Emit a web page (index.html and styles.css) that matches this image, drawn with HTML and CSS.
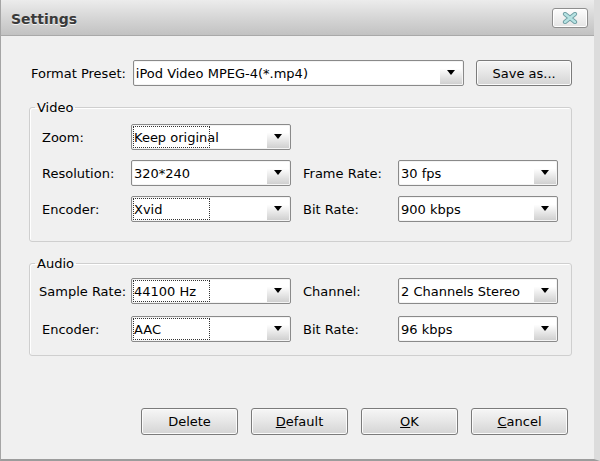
FILE: index.html
```html
<!DOCTYPE html>
<html lang="en">
<head>
    <meta charset="UTF-8">
    <title>Settings</title>
    <link rel="stylesheet" href="styles.css">
</head>
<body>
    <div class="window">
        <!-- barra de titulo -->
        <div class="titlebar">
            <span class="title">Settings</span>
            <button class="close" type="button">
                <svg width="16" height="12" viewBox="0 0 16 12">
                    <path d="M3 2 L13 10 M13 2 L3 10" stroke="#6f9ea3" stroke-width="4.2" stroke-linecap="round"/>
                    <path d="M3 2 L13 10 M13 2 L3 10" stroke="#b6e2e2" stroke-width="2.4" stroke-linecap="round"/>
                </svg>
            </button>
        </div>

        <div class="content">
            <div class="preset-row">
                <span class="preset-label">Format Preset:</span>
                <div class="combo combo-wide">
                    <span class="combo-text">iPod Video MPEG-4(*.mp4)</span>
                    <span class="combo-arrow"></span>
                </div>
                <button class="btn btn-save" type="button">Save as...</button>
            </div>

            <fieldset class="group group-video">
                <legend>Video</legend>
                <div class="grid">
                    <span class="field-label">Zoom:</span>
                    <div class="combo">
                        <span class="combo-text focus">Keep original</span>
                        <span class="combo-arrow"></span>
                    </div>
                    <span></span>
                    <span></span>

                    <span class="field-label">Resolution:</span>
                    <div class="combo">
                        <span class="combo-text">320*240</span>
                        <span class="combo-arrow"></span>
                    </div>
                    <span class="field-label">Frame Rate:</span>
                    <div class="combo">
                        <span class="combo-text">30 fps</span>
                        <span class="combo-arrow"></span>
                    </div>

                    <span class="field-label">Encoder:</span>
                    <div class="combo">
                        <span class="combo-text focus">Xvid</span>
                        <span class="combo-arrow"></span>
                    </div>
                    <span class="field-label">Bit Rate:</span>
                    <div class="combo">
                        <span class="combo-text">900 kbps</span>
                        <span class="combo-arrow"></span>
                    </div>
                </div>
            </fieldset>

            <fieldset class="group group-audio">
                <legend>Audio</legend>
                <div class="grid">
                    <span class="field-label field-label-wide">Sample Rate:</span>
                    <div class="combo">
                        <span class="combo-text focus">44100 Hz</span>
                        <span class="combo-arrow"></span>
                    </div>
                    <span class="field-label">Channel:</span>
                    <div class="combo">
                        <span class="combo-text">2 Channels Stereo</span>
                        <span class="combo-arrow"></span>
                    </div>

                    <span class="field-label">Encoder:</span>
                    <div class="combo">
                        <span class="combo-text focus">AAC</span>
                        <span class="combo-arrow"></span>
                    </div>
                    <span class="field-label">Bit Rate:</span>
                    <div class="combo">
                        <span class="combo-text">96 kbps</span>
                        <span class="combo-arrow"></span>
                    </div>
                </div>
            </fieldset>

            <!-- botoes de baixo -->
            <div class="buttons">
                <button class="btn" type="button">Delete</button>
                <button class="btn" type="button"><u>D</u>efault</button>
                <button class="btn" type="button"><u>O</u>K</button>
                <button class="btn" type="button"><u>C</u>ancel</button>
            </div>
        </div>
    </div>
</body>
</html>
```

FILE: styles.css
```css
body {
    margin: 0;
    background: #f0f0f0;
    font: normal 13px "DejaVu Sans", sans-serif;
    color: #000;
}

.window {
    width: 600px;
    height: 461px;
    box-sizing: border-box;
    display: flex;
    flex-direction: column;
    background: #f0f0f0;
    border: 1px solid #a5a5a5;
    border-top: none;
    border-right: 6px solid #dcdcdc;
    border-bottom: 2px solid #9c9c9c;
}

.titlebar {
    height: 36px;
    box-sizing: border-box;
    display: flex;
    align-items: center;
    justify-content: space-between;
    padding: 2px 6px 0 10px;
    background: linear-gradient(to bottom, #ececec, #d2d2d2 60%, #c2c2c2);
    border-bottom: 1px solid #a9a9a9;
}

.title {
    font: bold 14px "DejaVu Sans", sans-serif;
    color: #3a3a3a;
    text-shadow: 0 1px 0 #f4f4f4;
}

.close {
    width: 36px;
    height: 20px;
    margin-bottom: 2px;
    padding: 0;
    display: flex;
    align-items: center;
    justify-content: center;
    border: 1px solid #8e8e8e;
    border-radius: 3px;
    background: linear-gradient(to bottom, #fdfdfd, #e4e4e4);
    box-shadow: inset 0 0 0 1px #fff;
}

.content {
    flex: 1;
    display: flex;
    flex-direction: column;
    padding: 24px 22px 0 28px;
}

.preset-row {
    display: flex;
    align-items: center;
    height: 26px;
}

.preset-label {
    width: 102px;
    padding-left: 2px;
}

.combo {
    height: 26px;
    box-sizing: border-box;
    display: flex;
    align-items: stretch;
    border: 1px solid #8a8a8a;
    border-radius: 2px;
    background: #fff;
    box-shadow: inset 0 0 0 1px #f4f4f4;
}

.combo-wide {
    width: 332px;
}

.combo-text {
    flex: 1;
    display: flex;
    align-items: center;
    padding-left: 2px;
    white-space: nowrap;
}

.combo-text.focus {
    flex: none;
    width: 76px;
    margin: 1px 0 1px 1px;
    padding-left: 1px;
    outline: 1px dotted #333;
    outline-offset: -1px;
}

.combo-arrow {
    width: 22px;
    margin: 1px 1px 1px auto;
    background: linear-gradient(to bottom, #ffffff 30%, #d0d0d0);
    display: flex;
    align-items: center;
    justify-content: center;
}

.combo-arrow::after {
    content: "";
    border-left: 4px solid transparent;
    border-right: 4px solid transparent;
    border-top: 5px solid #000;
    margin-bottom: 2px;
}

.btn {
    width: 97px;
    height: 27px;
    padding: 0;
    font: normal 13px "DejaVu Sans", sans-serif;
    color: #000;
    border: 1px solid #7b7b7b;
    border-radius: 3px;
    background: linear-gradient(to bottom, #f6f6f6, #e6e6e6 50%, #d4d4d4);
    box-shadow: inset 0 0 0 1px #fbfbfb;
}

.btn-save {
    width: 96px;
    height: 26px;
    margin-left: 12px;
}

.group {
    margin: 0;
    border: 1px solid #cfcfcf;
    border-radius: 3px;
    box-shadow: inset 1px 1px 0 #fff;
}

.group legend {
    padding: 0 2px;
    margin-left: -7px;
}

.grid {
    display: grid;
    grid-template-columns: 89px 160px 107px 160px;
    grid-auto-rows: 26px;
    align-items: center;
}

.field-label:nth-child(4n+3) {
    padding-left: 12px;
}

.field-label-wide {
    margin-left: -3px;
}

.group-video {
    margin-top: 14px;
    padding: 9px 13px 19px 12px;
}

.group-video .grid {
    row-gap: 10px;
}

.group-audio {
    margin-top: 14px;
    padding: 7px 13px 13px 12px;
}

.group-audio .grid {
    row-gap: 12px;
}

.buttons {
    display: flex;
    justify-content: flex-end;
    gap: 13px;
    margin-top: 52px;
    padding-right: 4px;
}
```
